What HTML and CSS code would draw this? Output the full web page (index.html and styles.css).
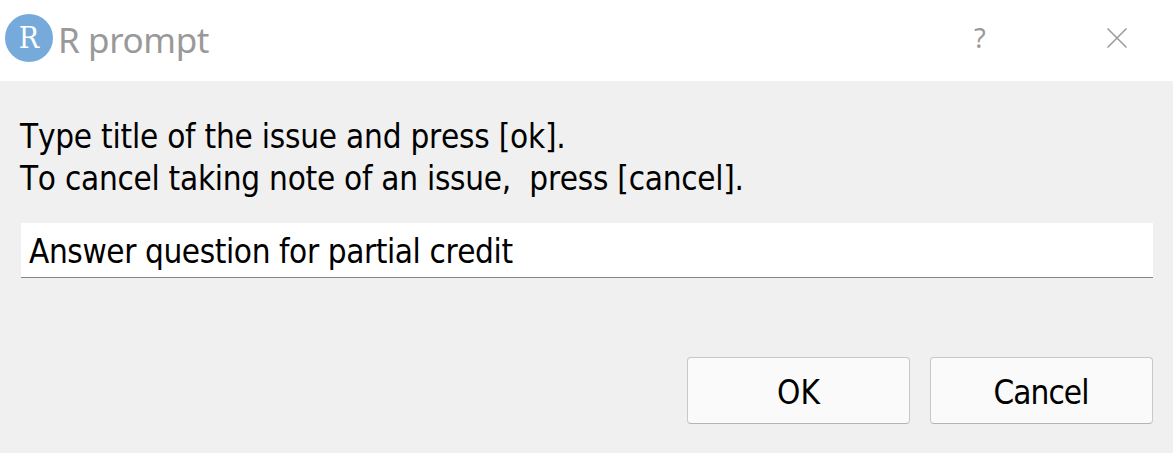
FILE: index.html
```html
<!DOCTYPE html>
<html lang="en">
<head>
<meta charset="utf-8">
<title>R prompt</title>
<link rel="stylesheet" href="styles.css">
</head>
<body>
<div class="dialog">
  <header class="titlebar">
    <span class="logo">R</span>
    <h1 class="title">R prompt</h1>
    <span class="help">?</span>
    <svg class="close" width="20" height="20" viewBox="0 0 20 20"><path d="M0.5 0.5 19.5 19.5M19.5 0.5 0.5 19.5"/></svg>
  </header>
  <main class="content">
    <p class="message"><span class="line line-type">Type title of the issue and press [ok].</span><span class="line line-cancel">To cancel taking note of an issue,  press [cancel].</span></p>
    <div class="field">Answer question for partial credit</div>
    <div class="actions">
      <button class="button">OK</button>
      <button class="button button-cancel">Cancel</button>
    </div>
  </main>
</div>
</body>
</html>
```
FILE: styles.css
```css
* { box-sizing: border-box; }
body { margin: 0; background: #f0f0f0; color: #000; }
.dialog {
  width: 1173px;
  height: 453px;
  overflow: hidden;
  background: #f0f0f0;
  font: 33px/42px "DejaVu Sans Condensed", "DejaVu Sans", sans-serif;
  font-kerning: none;
}
.titlebar {
  display: flex;
  height: 81px;
  padding: 14px 46px 0 5px;
  background: #fff;
  color: #999;
}
.logo {
  width: 48px;
  height: 48px;
  border-radius: 50%;
  background: #75aadb;
  color: #fff;
  font: 30px/48px "DejaVu Serif Condensed", "DejaVu Serif", serif;
  text-align: center;
}
.title {
  flex: 1;
  margin: 0 0 0 5px;
  font: 400 35px/52px "Noto Sans", sans-serif;
  letter-spacing: -0.4px;
}
.help {
  width: 12px;
  margin-right: 121px;
  margin-left: -1px;
  font: 27px/48px "Noto Sans", sans-serif;
}
.close { margin-top: 14px; fill: none; stroke: #999; stroke-width: 1.5; }
.content { padding: 35px 20px 0; }
.message { margin: 0; }
.line { display: block; white-space: pre; }
.line-type { letter-spacing: -0.23px; }
.line-cancel { letter-spacing: -0.27px; }
.field {
  height: 55px;
  margin: 23px 0 79px 1px;
  padding: 8px 8px 0;
  background: #fff;
  border-bottom: 1px solid #868686;
  white-space: pre;
  letter-spacing: -0.4px;
}
.actions { display: flex; justify-content: flex-end; gap: 20px; }
.button {
  width: 223px;
  height: 67px;
  padding: 4px 0 0;
  border: 1px solid #c8c8c8;
  border-bottom-color: #b4b4b4;
  border-radius: 4px;
  background: #fafafa;
  color: #000;
  font: inherit;
}
.button-cancel { padding-right: 1px; letter-spacing: -0.9px; }
```
